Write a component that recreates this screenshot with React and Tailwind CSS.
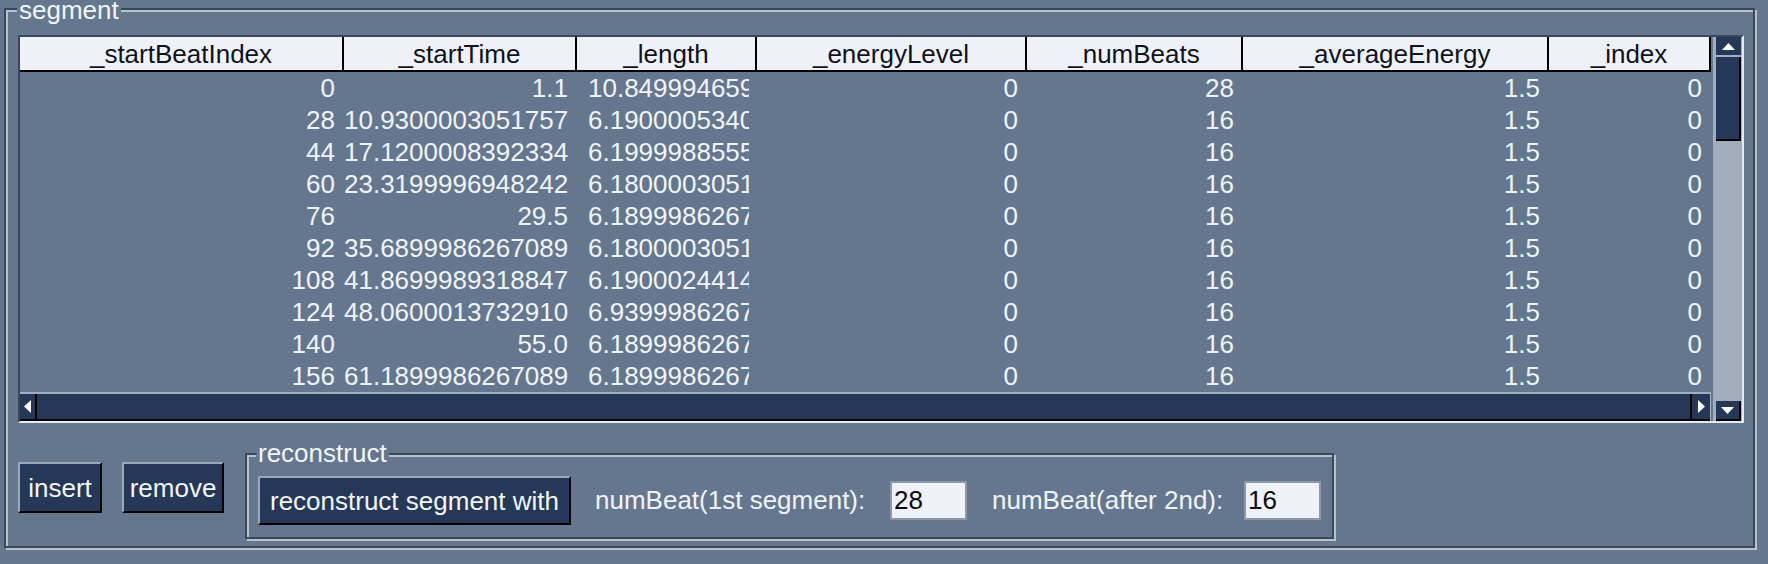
import React from 'react';

const cols = [
  { key: 'startBeatIndex', label: '_startBeatIndex', w: 'w-[324px]' },
  { key: 'startTime', label: '_startTime', w: 'w-[233px]' },
  { key: 'length', label: '_length', w: 'w-[180px]', clip: true },
  { key: 'energyLevel', label: '_energyLevel', w: 'w-[270px]' },
  { key: 'numBeats', label: '_numBeats', w: 'w-[216px]' },
  { key: 'averageEnergy', label: '_averageEnergy', w: 'w-[306px]' },
  { key: 'index', label: '_index', w: 'w-[162px]' },
];

const rows = [
  [0, '1.1', '10.8499946594238', 28],
  [28, '10.9300003051757', '6.19000053405762', 16],
  [44, '17.1200008392334', '6.19999885559082', 16],
  [60, '23.3199996948242', '6.18000030517578', 16],
  [76, '29.5', '6.18999862670898', 16],
  [92, '35.6899986267089', '6.18000030517578', 16],
  [108, '41.8699989318847', '6.19000244140625', 16],
  [124, '48.0600013732910', '6.93999862670898', 16],
  [140, '55.0', '6.18999862670898', 16],
  [156, '61.1899986267089', '6.18999862670898', 16],
].map(([b, t, l, n]) => ({
  startBeatIndex: b, startTime: t, length: l, energyLevel: 0, numBeats: n, averageEnergy: '1.5', index: 0,
}));

const btnCls = 'bg-[#253858] text-[#f2f5fa] border-2 border-t-[#9ca7b7] border-l-[#9ca7b7] border-b-black border-r-black leading-none';
const etched = 'border-2 border-[#3c4858] shadow-[inset_2px_2px_0_#b8c2d0,2px_2px_0_#b8c2d0]';

function Arrow({ dir }) {
  const pts = {
    up: '0,7 6.5,0 13,7',
    down: '0,0 13,0 6.5,7',
    left: '7,0 7,13 0,6.5',
    right: '0,0 0,13 7,6.5',
  }[dir];
  const horiz = dir === 'left' || dir === 'right';
  return (
    <svg width={horiz ? 7 : 13} height={horiz ? 13 : 7} viewBox={horiz ? '0 0 7 13' : '0 0 13 7'}>
      <polygon points={pts} fill="#ffffff" />
    </svg>
  );
}

function Table() {
  return (
    <div className="ml-[12px] mt-[25px] w-[1726px] h-[388px] flex border-2 border-t-[#3c4858] border-l-[#3c4858] border-b-[#e4eaf2] border-r-[#e4eaf2]">
      <div className="w-[1691px] flex flex-col">
        <div className="flex h-[35px] bg-[#eef2f8] text-[#10121c]">
          {cols.map((c) => (
            <div key={c.key} className={`${c.w} shrink-0 border-r-2 border-b-2 border-black text-center leading-[33px] pt-[1px]`}>{c.label}</div>
          ))}
        </div>
        <div className="h-[320px] text-[#f0f4fa]">
          {rows.map((r, i) => (
            <div key={i} className="flex h-[32px] leading-[31px] pt-[1px]">
              {cols.map((c) => (
                c.clip ? (
                  <div key={c.key} className={`${c.w} shrink-0 pl-[11px] pr-[8px]`}>
                    <div className="overflow-hidden whitespace-nowrap">{r[c.key]}</div>
                  </div>
                ) : (
                  <div key={c.key} className={`${c.w} shrink-0 text-right pr-[9px] whitespace-nowrap`}>{r[c.key]}</div>
                )
              ))}
            </div>
          ))}
        </div>
        <div className="h-[29px] border-t-2 border-[#a3aebd] bg-[#a3aebd] flex">
          <div className="flex-1 flex bg-[#253858] border-b-2 border-black">
            <div className="w-[17px] flex items-center justify-center border-r-2 border-black"><Arrow dir="left" /></div>
            <div className="flex-1" />
            <div className="w-[20px] flex items-center justify-center border-l-2 border-black"><Arrow dir="right" /></div>
          </div>
          <div className="w-[1px]" />
        </div>
      </div>
      <div className="w-[2px]" />
      <div className="w-[29px] bg-[#a3aebd] pl-[3px] pr-[1px] flex flex-col">
        <div className="h-[18px] bg-[#253858] flex items-center justify-center"><Arrow dir="up" /></div>
        <div className="h-[84px] mt-[2px] bg-[#253858] border-r-2 border-b-2 border-black" />
        <div className="flex-1" />
        <div className="h-[20px] bg-[#253858] border-r-2 border-b-2 border-black flex items-center justify-center"><Arrow dir="down" /></div>
      </div>
    </div>
  );
}

export default function App() {
  return (
    <div className="w-[1768px] h-[564px] bg-[#65778f] overflow-hidden font-['Liberation_Sans',Arial,sans-serif] text-[26px]">
      <div className="pl-[4px] pt-[8px]">
        <div className={`relative w-[1751px] h-[540px] ${etched}`}>
          <div className="absolute left-[11px] top-[-10px] px-[2px] bg-[#65778f] text-[#f2f5fa] leading-[20px]">segment</div>
          <Table />
          <div className="flex items-start">
            <button className={`${btnCls} ml-[12px] mt-[39px] w-[84px] h-[51px]`}>insert</button>
            <button className={`${btnCls} ml-[20px] mt-[39px] w-[102px] h-[51px]`}>remove</button>
            <div className={`relative ml-[21px] mt-[30px] w-[1089px] h-[86px] ${etched}`}>
              <div className="absolute left-[9px] top-[-12px] px-[2px] bg-[#65778f] text-[#f2f5fa] leading-[20px]">reconstruct</div>
              <div className="flex items-center pl-[11px] pt-[21px] text-[#f0f4fa]">
                <button className={`${btnCls} w-[313px] h-[49px]`}>reconstruct segment with</button>
                <span className="ml-[24px] w-[270px] whitespace-nowrap">numBeat(1st segment):</span>
                <div className="ml-[25px] w-[77px] h-[39px] bg-[#eef2f8] border-2 border-[#8e99a8] text-[#0a0a12] pl-[2px] leading-[35px]">28</div>
                <span className="ml-[25px] w-[228px] whitespace-nowrap">numBeat(after 2nd):</span>
                <div className="ml-[24px] w-[77px] h-[39px] bg-[#eef2f8] border-2 border-[#8e99a8] text-[#0a0a12] pl-[2px] leading-[35px]">16</div>
              </div>
            </div>
          </div>
        </div>
      </div>
    </div>
  );
}
